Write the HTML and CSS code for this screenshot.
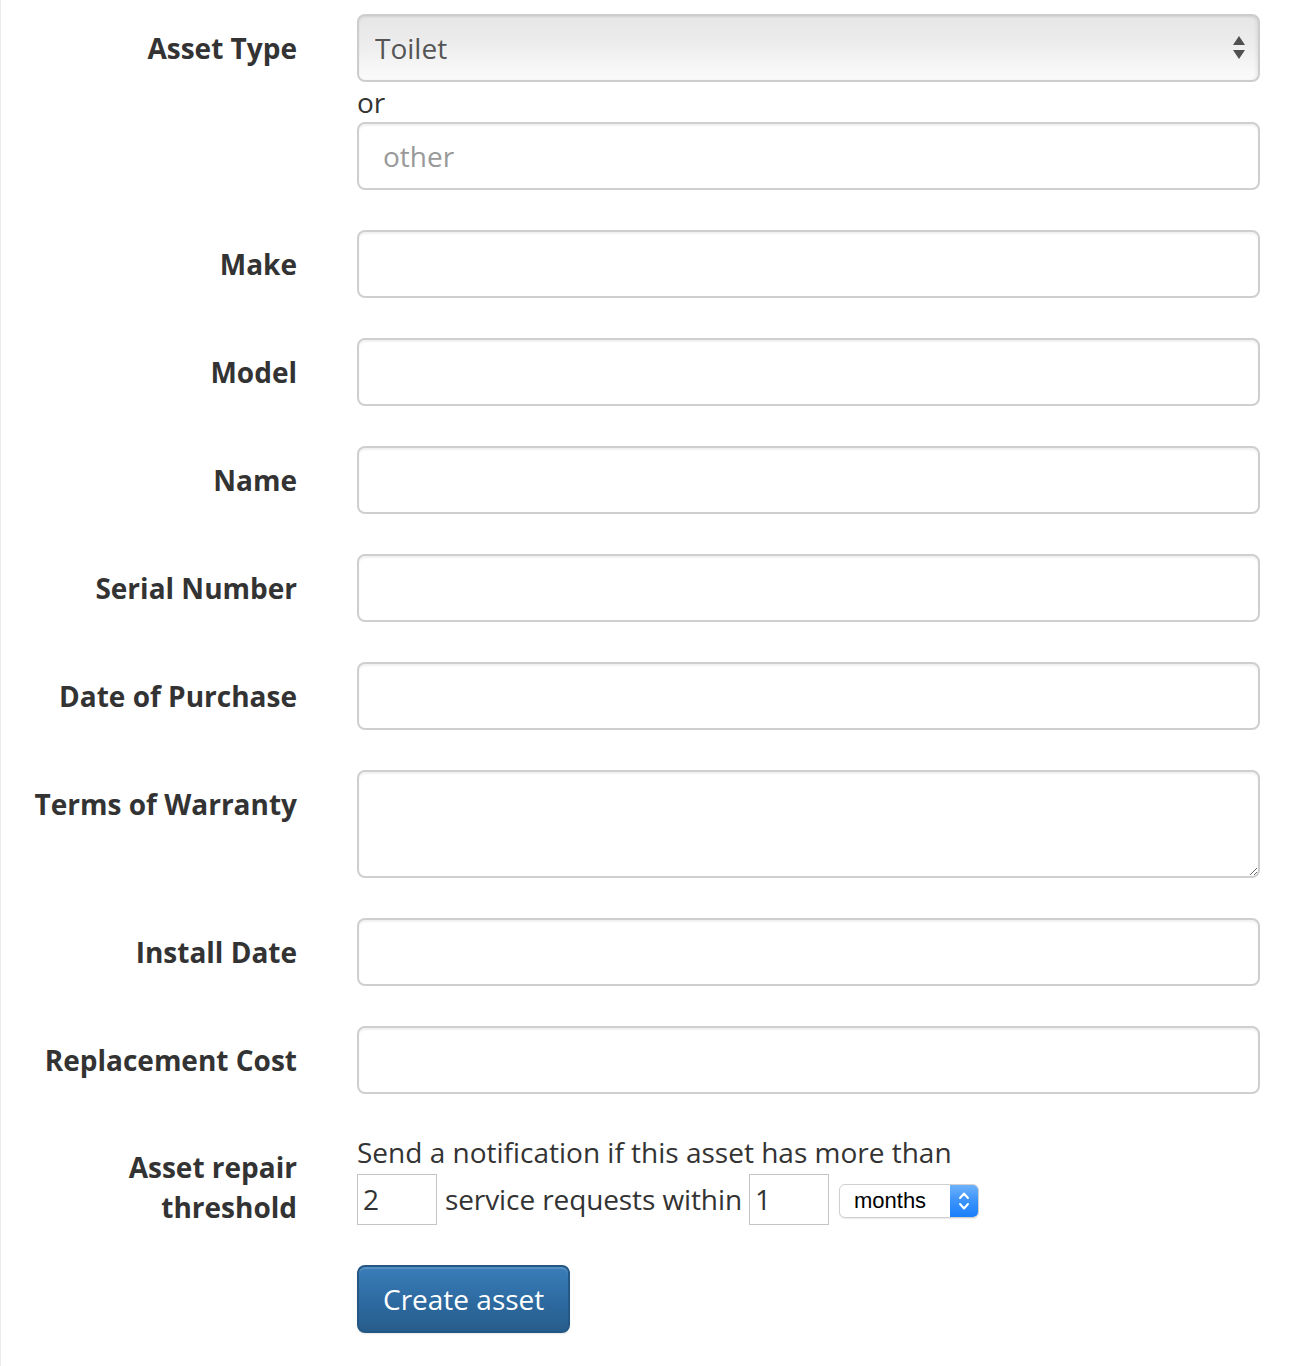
FILE: index.html
```html
<!DOCTYPE html>
<html lang="en">
<head>
<meta charset="utf-8">
<title>New asset</title>
<link rel="stylesheet" href="styles.css">
</head>
<body>
<div class="page">
  <form class="form">
    <div class="row">
      <label class="label" for="type">Asset Type</label>
      <div class="controls">
        <div class="select-wrap">
          <select id="type" class="select"><option>Toilet</option></select>
          <svg class="select-arrows" width="14" height="26" viewBox="0 0 14 26" aria-hidden="true">
            <path d="M7 1 L13 10 L1 10 Z" fill="#505050"/>
            <path d="M1 15 L13 15 L7 24 Z" fill="#505050"/>
          </svg>
        </div>
        <div class="or">or</div>
        <input class="input" type="text" placeholder="other">
      </div>
    </div>
    <div class="row">
      <label class="label">Make</label>
      <div class="controls"><input class="input" type="text"></div>
    </div>
    <div class="row">
      <label class="label">Model</label>
      <div class="controls"><input class="input" type="text"></div>
    </div>
    <div class="row">
      <label class="label">Name</label>
      <div class="controls"><input class="input" type="text"></div>
    </div>
    <div class="row">
      <label class="label">Serial Number</label>
      <div class="controls"><input class="input" type="text"></div>
    </div>
    <div class="row">
      <label class="label">Date of Purchase</label>
      <div class="controls"><input class="input" type="text"></div>
    </div>
    <div class="row">
      <label class="label">Terms of Warranty</label>
      <div class="controls"><textarea class="input textarea"></textarea></div>
    </div>
    <div class="row">
      <label class="label">Install Date</label>
      <div class="controls"><input class="input" type="text"></div>
    </div>
    <div class="row row-last">
      <label class="label">Replacement Cost</label>
      <div class="controls"><input class="input" type="text"></div>
    </div>
    <div class="row row-threshold">
      <label class="label">Asset repair<br>threshold</label>
      <div class="controls">
        <div class="line">Send a notification if this asset has more than</div>
        <div class="line line-inputs">
          <input class="small-input" type="text" value="2">
          <span class="inline-text">service requests within</span>
          <input class="small-input" type="text" value="1">
          <span class="mini-select">
            <span class="mini-text">months</span>
            <span class="mini-btn">
              <svg width="14" height="22" viewBox="0 0 14 22" aria-hidden="true">
                <path d="M3 8 L7 3.5 L11 8" fill="none" stroke="#fff" stroke-width="2" stroke-linecap="round" stroke-linejoin="round"/>
                <path d="M3 14 L7 18.5 L11 14" fill="none" stroke="#fff" stroke-width="2" stroke-linecap="round" stroke-linejoin="round"/>
              </svg>
            </span>
          </span>
        </div>
      </div>
    </div>
    <div class="row row-actions">
      <div></div>
      <div class="controls"><button type="button" class="btn">Create asset</button></div>
    </div>
  </form>
</div>
</body>
</html>
```

FILE: styles.css
```css
html, body {
  margin: 0;
  padding: 0;
  background: #fff;
}
body {
  font-family: "Open Sans", "Noto Sans", sans-serif;
  font-size: 28px;
  line-height: 40px;
  color: #333;
}
.page {
  min-height: 1366px;
  border-left: 1px solid #ececec;
  box-sizing: border-box;
}
.form {
  padding-top: 14px;
}
.row {
  display: grid;
  grid-template-columns: 296px 903px;
  column-gap: 60px;
  margin-bottom: 40px;
}
.row-last {
  margin-bottom: 38px;
}
.row-threshold {
  margin-bottom: 38px;
}
.label {
  text-align: right;
  font-weight: 700;
  padding-top: 14px;
  line-height: 40px;
  color: #333;
}
.row-threshold .label {
  padding-top: 15px;
}
.controls {
  display: flex;
  flex-direction: column;
  align-items: flex-start;
}
.input {
  box-sizing: border-box;
  width: 903px;
  height: 68px;
  margin: 0;
  padding: 0 24px;
  border: 2px solid #cfcfcf;
  border-radius: 8px;
  font-family: inherit;
  font-size: 28px;
  color: #555;
  background: #fff;
  box-shadow: inset 0 2px 2px rgba(0,0,0,0.06);
  outline: none;
}
.input::placeholder {
  color: #999;
}
.textarea {
  height: 108px;
  resize: vertical;
  padding-top: 10px;
}
.select-wrap {
  position: relative;
  width: 903px;
  height: 68px;
}
.select {
  -webkit-appearance: none;
  appearance: none;
  box-sizing: border-box;
  width: 903px;
  height: 68px;
  margin: 0;
  padding: 0 16px;
  border: 2px solid #cdcdcd;
  border-radius: 8px;
  font-family: inherit;
  font-size: 28px;
  color: #555;
  background: linear-gradient(to bottom, #e6e6e6 0%, #ececec 40%, #fbfbfb 100%);
  box-shadow: inset 0 1px 2px rgba(0,0,0,0.08), inset -3px 0 3px rgba(0,0,0,0.04);
  outline: none;
}
.select-arrows {
  position: absolute;
  right: 14px;
  top: 21px;
}
.or {
  line-height: 40px;
  height: 40px;
}
.line {
  line-height: 40px;
}
.line-inputs {
  display: flex;
  align-items: center;
  margin-top: 2px;
  height: 50px;
}
.small-input {
  box-sizing: border-box;
  width: 80px;
  height: 51px;
  margin: 0;
  padding: 0 5px;
  border: 1.5px solid #c4c4c4;
  border-radius: 0;
  font-family: inherit;
  font-size: 28px;
  color: #333;
  background: #fff;
  outline: none;
}
.inline-text {
  margin: 0 7px 0 8px;
  white-space: nowrap;
  letter-spacing: -0.1px;
}
.mini-select {
  display: inline-flex;
  margin-left: 10px;
  margin-top: 4px;
  height: 34px;
  width: 140px;
  box-sizing: border-box;
  border: 1px solid #d0d0d0;
  border-radius: 6px;
  overflow: hidden;
  background: #fff;
  box-shadow: 0 1px 1px rgba(0,0,0,0.08);
}
.mini-text {
  flex: 1;
  font-family: "Liberation Sans", Arial, sans-serif;
  font-size: 22px;
  line-height: 32px;
  color: #000;
  padding-left: 14px;
}
.mini-btn {
  width: 28px;
  display: flex;
  align-items: center;
  justify-content: center;
  background: linear-gradient(to bottom, #6db2fb 0%, #3b92fb 50%, #1a7ffb 100%);
}
.btn {
  box-sizing: border-box;
  height: 68px;
  padding: 0 24px;
  border: 2px solid #255784;
  border-radius: 8px;
  background: linear-gradient(to bottom, #3a7db9 0%, #2d6aa0 55%, #275d8c 100%);
  color: #fff;
  font-family: inherit;
  font-size: 28px;
  line-height: 40px;
  box-shadow: inset 0 2px 0 rgba(255,255,255,0.15), 0 1px 2px rgba(0,0,0,0.1);
  cursor: pointer;
}
```
